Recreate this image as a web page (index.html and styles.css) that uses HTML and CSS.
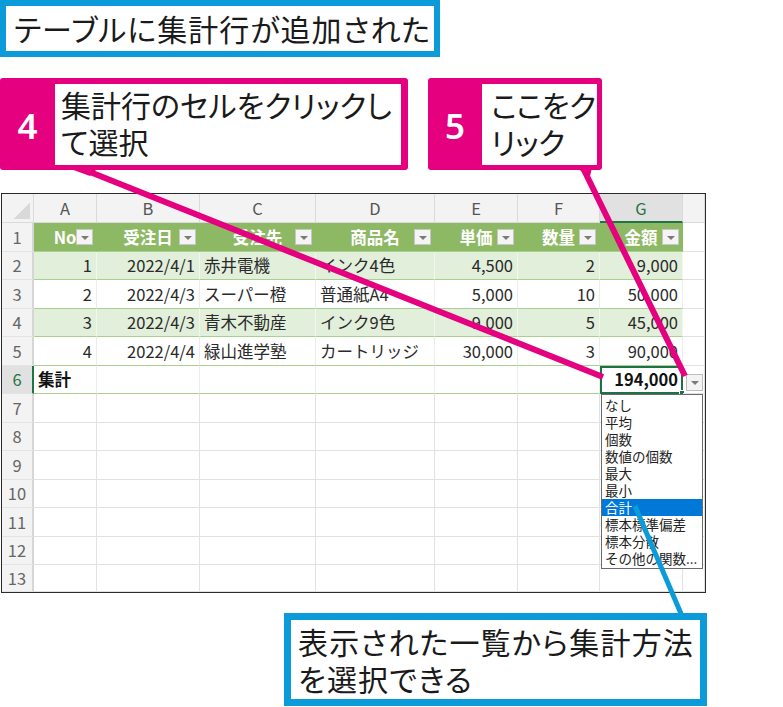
FILE: index.html
```html
<!DOCTYPE html>
<html lang="ja">
<head>
<meta charset="utf-8">
<title>集計行</title>
<link rel="stylesheet" href="styles.css">
</head>
<body>
<div class="page">
  <div class="caption">テーブルに集計行が追加された</div>
  <div class="callouts">
    <div class="callout c4"><div class="num">4</div><div class="ctext"><p>集計行のセルをクリックし</p><p>て選択</p></div></div>
    <div class="callout c5"><div class="num">5</div><div class="ctext"><p>ここをク</p><p>リック</p></div></div>
  </div>
  <div class="sheet">
    <div class="r hd">
      <div class="c corner"></div>
      <div class="c ch">A</div><div class="c ch">B</div><div class="c ch">C</div><div class="c ch">D</div><div class="c ch">E</div><div class="c ch">F</div><div class="c ch sel">G</div><div class="c ch"></div>
    </div>
    <div class="r">
      <div class="c rh">1</div>
      <div class="c th">No<span class="fb"></span></div>
      <div class="c th">受注日<span class="fb"></span></div>
      <div class="c th">受注先<span class="fb"></span></div>
      <div class="c th">商品名<span class="fb"></span></div>
      <div class="c th">単価<span class="fb"></span></div>
      <div class="c th">数量<span class="fb"></span></div>
      <div class="c th">金額<span class="fb"></span></div>
      <div class="c"></div>
    </div>
    <div class="r">
      <div class="c rh">2</div>
      <div class="c t b n">1</div><div class="c t b n">2022/4/1</div><div class="c t b">赤井電機</div><div class="c t b">インク4色</div><div class="c t b n">4,500</div><div class="c t b n">2</div><div class="c t b n">9,000</div><div class="c"></div>
    </div>
    <div class="r">
      <div class="c rh">3</div>
      <div class="c t n">2</div><div class="c t n">2022/4/3</div><div class="c t">スーパー橙</div><div class="c t">普通紙A4</div><div class="c t n">5,000</div><div class="c t n">10</div><div class="c t n">50,000</div><div class="c"></div>
    </div>
    <div class="r">
      <div class="c rh">4</div>
      <div class="c t b n">3</div><div class="c t b n">2022/4/3</div><div class="c t b">青木不動産</div><div class="c t b">インク9色</div><div class="c t b n">9,000</div><div class="c t b n">5</div><div class="c t b n">45,000</div><div class="c"></div>
    </div>
    <div class="r">
      <div class="c rh">5</div>
      <div class="c t n">4</div><div class="c t n">2022/4/4</div><div class="c t">緑山進学塾</div><div class="c t">カートリッジ</div><div class="c t n">30,000</div><div class="c t n">3</div><div class="c t n">90,000</div><div class="c"></div>
    </div>
    <div class="r">
      <div class="c rh sel">6</div>
      <div class="c t tot">集計</div><div class="c t"></div><div class="c t"></div><div class="c t"></div><div class="c t"></div><div class="c t"></div><div class="c t tot n active">194,000<span class="handle"></span></div><div class="c ddcell"><span class="ddbtn"></span></div>
    </div>
    <div class="r"><div class="c rh">7</div><div class="c"></div><div class="c"></div><div class="c"></div><div class="c"></div><div class="c"></div><div class="c"></div><div class="c"></div><div class="c"></div></div>
    <div class="r"><div class="c rh">8</div><div class="c"></div><div class="c"></div><div class="c"></div><div class="c"></div><div class="c"></div><div class="c"></div><div class="c"></div><div class="c"></div></div>
    <div class="r"><div class="c rh">9</div><div class="c"></div><div class="c"></div><div class="c"></div><div class="c"></div><div class="c"></div><div class="c"></div><div class="c"></div><div class="c"></div></div>
    <div class="r"><div class="c rh">10</div><div class="c"></div><div class="c"></div><div class="c"></div><div class="c"></div><div class="c"></div><div class="c"></div><div class="c"></div><div class="c"></div></div>
    <div class="r"><div class="c rh">11</div><div class="c"></div><div class="c"></div><div class="c"></div><div class="c"></div><div class="c"></div><div class="c"></div><div class="c"></div><div class="c"></div></div>
    <div class="r"><div class="c rh">12</div><div class="c"></div><div class="c"></div><div class="c"></div><div class="c"></div><div class="c"></div><div class="c"></div><div class="c"></div><div class="c"></div></div>
    <div class="r last"><div class="c rh">13</div><div class="c"></div><div class="c"></div><div class="c"></div><div class="c"></div><div class="c"></div><div class="c"></div><div class="c"></div><div class="c"></div></div>
  </div>
  <div class="note"><p>表示された一覧から集計方法</p><p>を選択できる</p></div>

  <ul class="dropdown">
    <li>なし</li>
    <li>平均</li>
    <li>個数</li>
    <li>数値の個数</li>
    <li>最大</li>
    <li>最小</li>
    <li class="hl">合計</li>
    <li>標本標準偏差</li>
    <li>標本分散</li>
    <li>その他の関数...</li>
  </ul>

  <svg class="lines" width="783" height="707" viewBox="0 0 783 707">
    <polygon points="68,168 98,168 90,176" fill="#e4007f"/>
    <line x1="80" y1="168" x2="603" y2="377" stroke="#e4007f" stroke-width="6"/>
    <polygon points="576,168 592,168 590,176" fill="#e4007f"/>
    <line x1="583" y1="168" x2="685" y2="376" stroke="#e4007f" stroke-width="6"/>
    <line x1="635" y1="506" x2="682" y2="616" stroke="#0a9bd8" stroke-width="5"/>
  </svg>
</div>
</body>
</html>
```

FILE: styles.css
```css
* { box-sizing: border-box; margin: 0; padding: 0; }
body { background: #fff; font-family: "Noto Sans CJK JP", "Noto Sans", sans-serif; color: #1a1a1a; }
.page { position: relative; width: 783px; height: 707px; overflow: hidden; }

.caption {
  width: 440px; height: 57px;
  border: 6px solid #0a9bd8;
  font-size: 30px; line-height: 44px;
  padding-left: 8px;
  font-feature-settings: "palt";
  letter-spacing: 1px;
  white-space: nowrap;
}

.callouts { display: flex; gap: 20px; margin-top: 21px; }
.callout {
  display: flex; height: 92px;
  background: #e4007f; border-radius: 3px;
  padding: 6px 7px 5px 0;
  flex: none;
}
.c4 { width: 408px; }
.c5 { width: 174px; padding-right: 5px; }
.num {
  flex: none;
  width: 55px; display: flex; align-items: center; justify-content: center;
  color: #fff; font-family: "Noto Sans", sans-serif; font-weight: 600; font-size: 35px;
  padding-top: 2px;
}
.c5 .num { width: 54px; }
.ctext {
  flex: 1; min-width: 0; background: #fff;
  font-size: 30px; line-height: 37px;
  padding: 2px 0 0 6px;
  font-feature-settings: "palt";
  letter-spacing: 0;
  white-space: nowrap;
}
.ctext p, .note p { height: 37px; }
.c5 .ctext { padding-left: 9px; letter-spacing: -0.5px; }

.sheet {
  margin: 23px 0 0 1px; width: 705px;
  border: 1px solid #2b2b2b;
  font-size: 16.5px; color: #2a2a2a;
}
.r {
  display: grid;
  grid-template-columns: 32px 63px 103px 116px 119px 83px 82px 83px 22px;
  height: 28.5px;
}
.r.hd { height: 29px; }
.r.last { height: 26.5px; }
.c {
  position: relative;
  display: flex; align-items: center;
  padding: 0 4px;
  border-right: 1px solid #e1e1e1;
  border-bottom: 1px solid #e1e1e1;
  white-space: nowrap;
}
.corner, .ch { background: #f3f3f3; border-color: #dadada; }
.corner::after {
  content: ""; position: absolute; right: 3px; bottom: 3px;
  width: 16px; height: 16px;
  background: linear-gradient(135deg, transparent 50%, #d9d9d9 50%);
}
.ch { justify-content: center; color: #555; font-size: 16.5px; }
.ch.sel { background: #e1e1e1; color: #217346; border-bottom: 2px solid #217346; }
.rh {
  background: #f3f3f3; justify-content: center; color: #666;
  border-right: 2px solid #d6d6d6; border-bottom-color: #e4e4e4;
  padding: 0;
}
.rh.sel { background: #e1e1e1; color: #217346; border-right: 2px solid #217346; }

.th {
  background: #8eb964; color: #fff; font-weight: bold;
  justify-content: center;
  border-right-color: #8eb964; border-bottom-color: #a9d08e;
}
.fb {
  position: absolute; right: 3px; top: 6px;
  width: 17px; height: 16px;
  background: #f4f4f4; border: 1px solid #c7c7c7;
}
.fb::after, .ddbtn::after {
  content: ""; position: absolute; left: 4px; top: 6px;
  border-left: 4px solid transparent; border-right: 4px solid transparent;
  border-top: 4px solid #7a7a7a;
}
.t { border-bottom-color: #a9d08e; border-right-color: #ececec; }
.b { background: #e2efda; border-right-color: #f2f7ee; }
.n { justify-content: flex-end; }
.tot { font-weight: bold; color: #111; }
.active { outline: 2px solid #1e7145; outline-offset: -2px; }
.handle {
  position: absolute; right: -3px; bottom: -3px;
  width: 6px; height: 6px; background: #1e7145; border: 1px solid #fff;
}
.ddcell { align-items: flex-end; padding: 0 0 2px 3px; }
.ddbtn {
  position: relative; display: block;
  width: 17px; height: 17px;
  background: #f3f3f3; border: 1px solid #bdbdbd;
}

.note {
  margin: 20px 0 0 284px;
  width: 423px; height: 93px;
  border: 7px solid #0a9bd8;
  font-size: 30px; line-height: 37px;
  padding: 3px 0 0 7px;
  font-feature-settings: "palt";
  letter-spacing: 1.2px;
  white-space: nowrap;
}

.dropdown {
  position: absolute; left: 601px; top: 394px;
  width: 102px; height: 175px;
  list-style: none;
  background: #fff; border: 1px solid #6b6b6b;
  padding-top: 2px;
  font-size: 13.5px; line-height: 17px; color: #222;
}
.dropdown li { height: 17px; padding-left: 3px; white-space: nowrap; }
.dropdown li.hl { background: #0078d7; color: #fff; }

.lines { position: absolute; left: 0; top: 0; pointer-events: none; }
```
